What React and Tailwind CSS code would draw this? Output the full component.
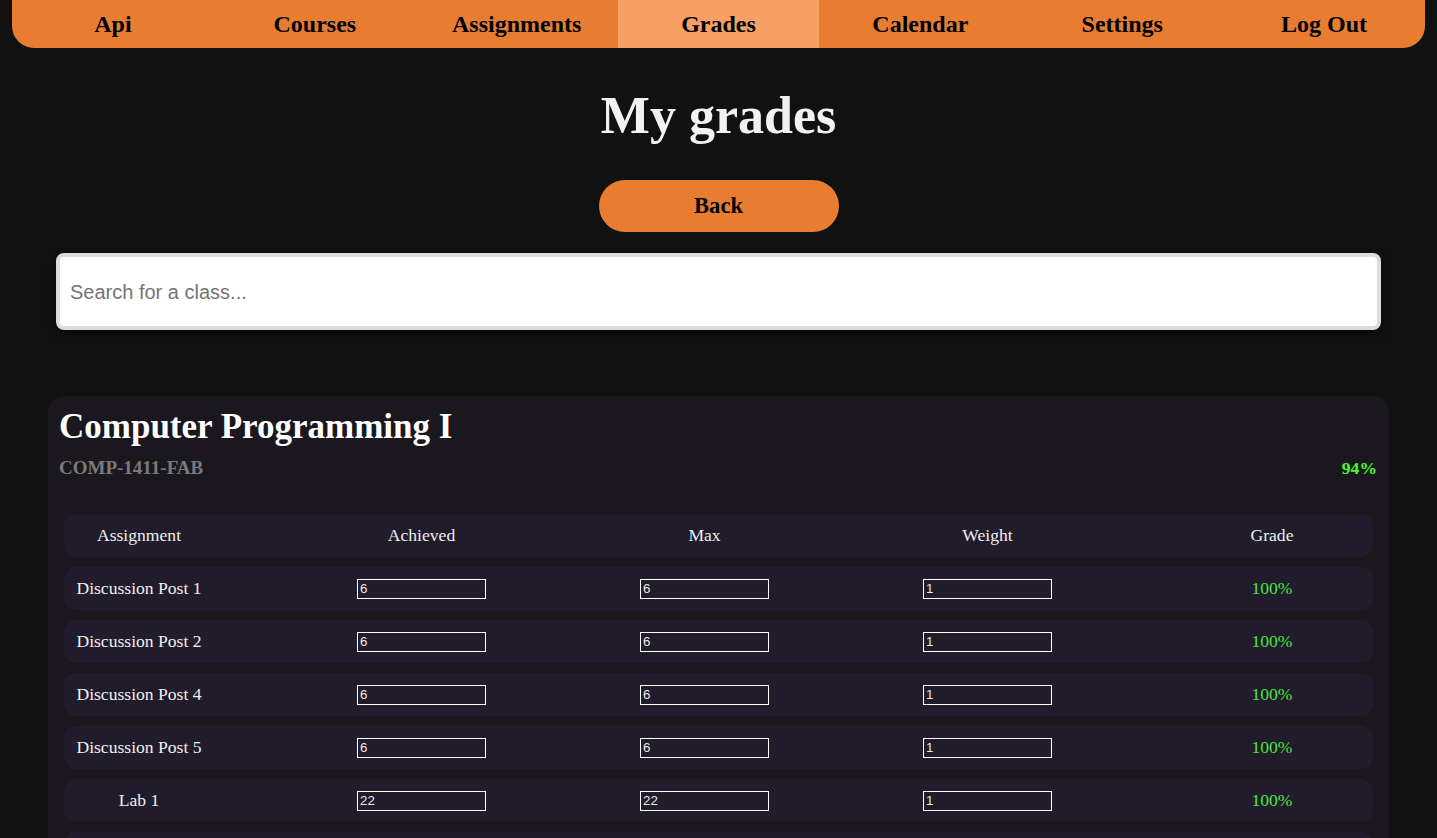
import { useState } from 'react';

const navItems = ['Api', 'Courses', 'Assignments', 'Grades', 'Calendar', 'Settings', 'Log Out'];

const rows = [
  { name: 'Discussion Post 1', achieved: '6', max: '6', weight: '1' },
  { name: 'Discussion Post 2', achieved: '6', max: '6', weight: '1' },
  { name: 'Discussion Post 4', achieved: '6', max: '6', weight: '1' },
  { name: 'Discussion Post 5', achieved: '6', max: '6', weight: '1' },
  { name: 'Lab 1', achieved: '22', max: '22', weight: '1' },
  { name: 'Lab 2', achieved: '20', max: '20', weight: '1' },
];

const serif = { fontFamily: '"Liberation Serif", "Times New Roman", serif' };

function GradeRow({ row }) {
  const [vals, setVals] = useState(row);
  const cellInput =
    'w-[129px] h-[20px] border border-white bg-transparent px-[2px] text-[13.3px] text-[#e8e8e8] outline-none font-["Liberation_Sans",Arial,sans-serif]';
  return (
    <div className="grid grid-cols-[216px_283px_283px_283px_1fr] items-center h-[43px] rounded-[12px] bg-[#211c2b] text-[17.6px]">
      <div className="pr-[66px] text-center text-[#f0f0f0]">{vals.name}</div>
      <div className="flex justify-center">
        <input className={cellInput} value={vals.achieved} onChange={(e) => setVals({ ...vals, achieved: e.target.value })} />
      </div>
      <div className="flex justify-center">
        <input className={cellInput} value={vals.max} onChange={(e) => setVals({ ...vals, max: e.target.value })} />
      </div>
      <div className="flex justify-center">
        <input className={cellInput} value={vals.weight} onChange={(e) => setVals({ ...vals, weight: e.target.value })} />
      </div>
      <div className="pl-[42px] text-center text-[#48e63a]">100%</div>
    </div>
  );
}

export default function App() {
  const [search, setSearch] = useState('');

  return (
    <div className="min-h-screen bg-[#111111] pb-10" style={serif}>
      <nav className="mx-[12px] h-[48px] flex rounded-b-[22px] bg-[#e87d32] overflow-hidden">
        {navItems.map((item) => (
          <a
            key={item}
            className={`flex-1 flex items-center justify-center text-[24px] font-bold text-black cursor-pointer ${
              item === 'Grades' ? 'bg-[#f89f65]' : ''
            }`}
          >
            {item}
          </a>
        ))}
      </nav>

      <h1 className="mt-[38px] h-[60px] flex items-center justify-center text-[52px] font-bold text-[#f2f2f2]">
        My grades
      </h1>

      <div className="mt-[34px] flex justify-center">
        <button className="w-[240px] h-[52px] rounded-full bg-[#e87d32] text-[22.6px] font-bold text-black">
          Back
        </button>
      </div>

      <div className="mt-[21px] px-[56px]">
        <input
          value={search}
          onChange={(e) => setSearch(e.target.value)}
          placeholder="Search for a class..."
          className="w-full h-[77px] rounded-[8px] border-[4px] border-[#dcdcdc] bg-white px-[10px] pt-[1px] text-[20px] text-black placeholder:text-[#757575] outline-none shadow-[0_4px_10px_rgba(0,0,0,0.5)] font-['Liberation_Sans',Arial,sans-serif]"
        />
      </div>

      <div className="mt-[66px] mx-[48px] rounded-[16px] bg-[#1a171f] pt-[9px] pb-[16px]">
        <h2 className="px-[11px] h-[44px] flex items-center text-[35px] font-bold text-white">
          Computer Programming I
        </h2>
        <div className="mt-[8px] pl-[11px] pr-[12px] h-[22px] flex items-center justify-between font-bold text-[19px]">
          <span className="text-[#7a7a7a]">COMP-1411-FAB</span>
          <span className="text-[17.6px] text-[#44ff22]">94%</span>
        </div>

        <div className="mt-[35px] px-[16px] flex flex-col gap-[10px]">
          <div className="grid grid-cols-[216px_283px_283px_283px_1fr] items-center h-[43px] rounded-[12px] bg-[#211c2b] text-[17.6px] text-[#eeeeee]">
            <div className="pr-[66px] text-center">Assignment</div>
            <div className="text-center">Achieved</div>
            <div className="text-center">Max</div>
            <div className="text-center">Weight</div>
            <div className="pl-[42px] text-center">Grade</div>
          </div>
          {rows.map((row) => (
            <GradeRow key={row.name} row={row} />
          ))}
        </div>
      </div>
    </div>
  );
}
